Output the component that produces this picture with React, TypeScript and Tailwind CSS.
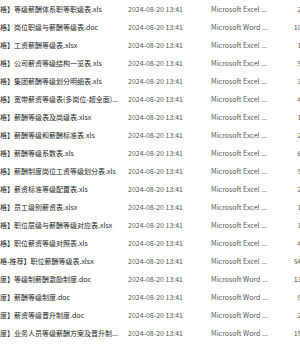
const files = [
  { tag: "表格", name: "等级薪酬体系职等职级表.xls", kind: "Excel", size: "23 KB" },
  { tag: "表格", name: "岗位职级与薪酬等级表.doc", kind: "Word", size: "108 KB" },
  { tag: "表格", name: "工资薪酬等级表.xlsx", kind: "Excel", size: "12 KB" },
  { tag: "表格", name: "公司薪资等级结构一览表.xls", kind: "Excel", size: "56 KB" },
  { tag: "表格", name: "集团薪酬等级划分明细表.xls", kind: "Excel", size: "34 KB" },
  { tag: "表格", name: "宽带薪资等级表(多岗位-超全面)...", kind: "Excel", size: "42 KB" },
  { tag: "表格", name: "薪酬等级表及岗级表.xlsx", kind: "Excel", size: "17 KB" },
  { tag: "表格", name: "薪酬等级和薪酬标准表.xls", kind: "Excel", size: "28 KB" },
  { tag: "表格", name: "薪酬等级系数表.xls", kind: "Excel", size: "63 KB" },
  { tag: "表格", name: "薪酬制度岗位工资等级划分表.xls", kind: "Excel", size: "52 KB" },
  { tag: "表格", name: "薪资标准等级配置表.xls", kind: "Excel", size: "26 KB" },
  { tag: "表格", name: "员工级别薪资表.xlsx", kind: "Excel", size: "14 KB" },
  { tag: "表格", name: "职位层级与薪酬等级对应表.xlsx", kind: "Excel", size: "13 KB" },
  { tag: "表格", name: "职位薪资等级对照表.xls", kind: "Excel", size: "45 KB" },
  { tag: "表格-推荐", name: "职位薪酬等级表.xlsx", kind: "Excel", size: "545 KB" },
  { tag: "制度", name: "等级制薪酬激励制度.doc", kind: "Word", size: "132 KB" },
  { tag: "制度", name: "薪酬等级制度.doc", kind: "Word", size: "92 KB" },
  { tag: "制度", name: "薪资等级晋升制度.doc", kind: "Word", size: "25 KB" },
  { tag: "制度", name: "业务人员等级薪酬方案及晋升制...", kind: "Word", size: "154 KB" },
]

export default function App() {
  return (
    <div className="h-[350px] w-[300px] overflow-hidden bg-white font-['Noto_Sans_CJK_SC',sans-serif] text-[7px] leading-none">
      {files.map((f, i) => (
        <div key={i} className="ml-[-14px] flex h-[18px] items-center whitespace-nowrap">
          {/* name column, left part of the tag runs off the window */}
          <div className="w-[142px] shrink-0 overflow-hidden pr-[4px] text-[#222]">
            【{f.tag}】{f.name}
          </div>
          <div className="w-[83px] shrink-0 text-[#555]">2024-08-20 13:41</div>
          <div className="w-[67px] shrink-0 text-[#555]">Microsoft {f.kind} ...</div>
          <div className="w-[38px] shrink-0 text-right text-[#555]">{f.size}</div>
        </div>
      ))}
    </div>
  )
}
